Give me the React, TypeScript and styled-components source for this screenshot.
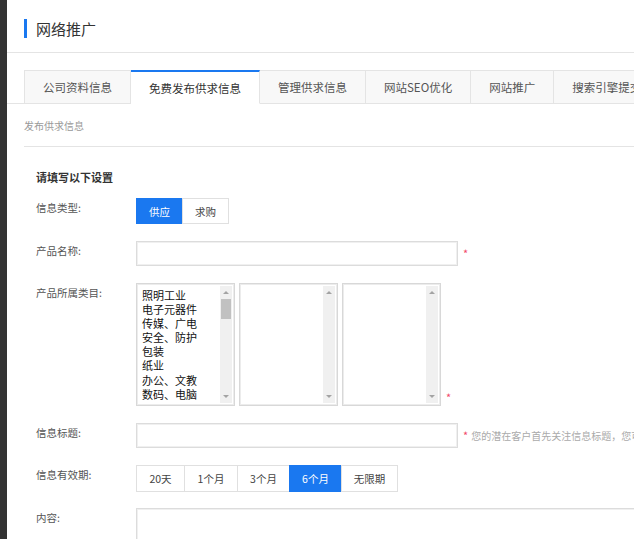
import React from "react";
import styled, { createGlobalStyle } from "styled-components";

const GlobalStyle = createGlobalStyle`
  body {
    margin: 0;
    background: #fff;
    font-family: "Noto Sans CJK SC", "Liberation Sans", sans-serif;
    overflow: hidden;
  }
`;

const BLUE = "#1a78f0";
const LINE = "#e4e4e4";

const Shell = styled.div`
  display: flex;
  height: 539px;
`;

const Sidebar = styled.div`
  width: 7px;
  flex-shrink: 0;
  background: #333;
`;

const Main = styled.div`
  width: 627px;
  flex-shrink: 0;
  overflow: hidden;
  background: #fff;
`;

const Header = styled.header`
  height: 53px;
  box-sizing: border-box;
  padding: 5px 0 0 17px;
  border-bottom: 1px solid ${LINE};
  display: flex;
  align-items: center;
`;

const TitleMark = styled.span`
  width: 3px;
  height: 19px;
  background: ${BLUE};
  margin-right: 9px;
`;

const Title = styled.h1`
  margin: 0;
  font-size: 15px;
  font-weight: normal;
  color: #333;
  line-height: 20px;
`;

const TabBar = styled.nav`
  margin-top: 17px;
  padding-left: 17px;
  display: flex;
  border-bottom: 1px solid ${LINE};
  height: 33px;
`;

const Tab = styled.div<{ $active?: boolean; $first?: boolean }>`
  flex-shrink: 0;
  height: 34px;
  box-sizing: border-box;
  padding: 0 18px;
  display: flex;
  align-items: center;
  white-space: nowrap;
  font-size: 11.5px;
  color: ${(p) => (p.$active ? "#333" : "#555")};
  background: ${(p) => (p.$active ? "#fff" : "#f8f8f8")};
  border-top: ${(p) => (p.$active ? `2px solid ${BLUE}` : `1px solid ${LINE}`)};
  border-right: 1px solid ${LINE};
  border-left: ${(p) => (p.$first ? `1px solid ${LINE}` : "none")};
  border-bottom: 1px solid ${(p) => (p.$active ? "#fff" : LINE)};
`;

const Crumb = styled.div`
  margin-left: 17px;
  padding: 12px 0 10px;
  line-height: 20px;
  font-size: 10px;
  color: #999;
  border-bottom: 1px solid ${LINE};
`;

const Form = styled.form`
  padding-left: 29px;
`;

const Heading = styled.h2`
  margin: 20px 0 11px;
  font-size: 11px;
  line-height: 20px;
  font-weight: bold;
  color: #333;
`;

const Row = styled.div<{ $gap?: number }>`
  display: flex;
  align-items: flex-start;
  margin-bottom: ${(p) => p.$gap ?? 17}px;
`;

const Label = styled.label`
  width: 100px;
  flex-shrink: 0;
  font-size: 10.5px;
  line-height: 20px;
  color: #555;
`;

const Group = styled.div`
  display: flex;
  flex-shrink: 0;
`;

const SegButton = styled.button<{ $active?: boolean; $h: number; $w: number }>`
  width: ${(p) => p.$w}px;
  height: ${(p) => p.$h}px;
  box-sizing: border-box;
  margin: 0 0 0 -1px;
  padding: 0;
  font-family: inherit;
  font-size: 10.5px;
  color: ${(p) => (p.$active ? "#fff" : "#444")};
  background: ${(p) => (p.$active ? BLUE : "#fff")};
  border: 1px solid ${(p) => (p.$active ? BLUE : "#e0e0e0")};
  &:first-child {
    margin-left: 0;
  }
`;

const TextInput = styled.input`
  flex-shrink: 0;
  width: 322px;
  height: 25px;
  box-sizing: border-box;
  border: 1px solid #dcdcdc;
  box-shadow: inset 0 0 0 1px #f0f0f0;
  outline: none;
  margin: 0;
`;

const Required = styled.span<{ $top?: number }>`
  flex-shrink: 0;
  color: #f2486a;
  font-size: 11px;
  line-height: 1;
  margin: ${(p) => p.$top ?? 7}px 0 0 5px;
`;

const Hint = styled.span`
  font-size: 10px;
  line-height: 20px;
  margin: 3px 0 0 3px;
  color: #aaa;
  white-space: nowrap;
`;

const Lists = styled.div`
  display: flex;
  flex-shrink: 0;
  gap: 4px;
`;

const ListBox = styled.div`
  position: relative;
  width: 99px;
  height: 123px;
  box-sizing: border-box;
  border: 1px solid #d8d8d8;
  box-shadow: inset 0 0 0 1px #ececec;
  overflow: hidden;
  padding: 4px 0 0 5px;
`;

const ListItem = styled.div`
  font-size: 11px;
  line-height: 14.1px;
  color: #111;
  white-space: nowrap;
`;

const ScrollTrack = styled.div`
  position: absolute;
  top: 2px;
  right: 2px;
  bottom: 2px;
  width: 12px;
  background: #f0f0f0;
`;

const Arrow = styled.span<{ $down?: boolean }>`
  position: absolute;
  left: 3px;
  ${(p) => (p.$down ? "bottom: 5px;" : "top: 5px;")}
  width: 0;
  height: 0;
  border-left: 3px solid transparent;
  border-right: 3px solid transparent;
  ${(p) =>
    p.$down ? "border-top: 3px solid #a3a3a3;" : "border-bottom: 3px solid #a3a3a3;"}
`;

const Thumb = styled.span`
  position: absolute;
  top: 13px;
  left: 1px;
  width: 10px;
  height: 20px;
  background: #c1c1c1;
`;

const TextArea = styled.textarea`
  flex-shrink: 0;
  width: 520px;
  height: 120px;
  box-sizing: border-box;
  border: 1px solid #dcdcdc;
  box-shadow: inset 0 0 0 1px #f0f0f0;
  resize: none;
  margin: 0;
  outline: none;
`;

const tabs = ["公司资料信息", "免费发布供求信息", "管理供求信息", "网站SEO优化", "网站推广", "搜索引擎提交"];
const categories = ["照明工业", "电子元器件", "传媒、广电", "安全、防护", "包装", "纸业", "办公、文教", "数码、电脑"];
const periods = [
  { t: "20天", w: 49 },
  { t: "1个月", w: 54 },
  { t: "3个月", w: 53 },
  { t: "6个月", w: 53, active: true },
  { t: "无限期", w: 57 },
];

const Scroll = ({ thumb }: { thumb?: boolean }) => (
  <ScrollTrack>
    <Arrow />
    {thumb && <Thumb />}
    <Arrow $down />
  </ScrollTrack>
);

export default function App() {
  return (
    <>
      <GlobalStyle />
      <Shell>
        <Sidebar />
        <Main>
          <Header>
            <TitleMark />
            <Title>网络推广</Title>
          </Header>
          <TabBar>
            {tabs.map((t, i) => (
              <Tab key={t} $first={i === 0} $active={i === 1}>
                {t}
              </Tab>
            ))}
          </TabBar>
          <Crumb>发布供求信息</Crumb>
          <Form onSubmit={(e) => e.preventDefault()}>
            <Heading>请填写以下设置</Heading>
            <Row>
              <Label>信息类型:</Label>
              <Group>
                <SegButton type="button" $active $h={26} $w={47}>
                  供应
                </SegButton>
                <SegButton type="button" $h={26} $w={47}>
                  求购
                </SegButton>
              </Group>
            </Row>
            <Row>
              <Label>产品名称:</Label>
              <TextInput />
              <Required>*</Required>
            </Row>
            <Row>
              <Label>产品所属类目:</Label>
              <Lists>
                <ListBox>
                  {categories.map((c) => (
                    <ListItem key={c}>{c}</ListItem>
                  ))}
                  <Scroll thumb />
                </ListBox>
                <ListBox>
                  <Scroll />
                </ListBox>
                <ListBox>
                  <Scroll />
                </ListBox>
              </Lists>
              <Required $top={109}>*</Required>
            </Row>
            <Row>
              <Label>信息标题:</Label>
              <TextInput />
              <Required>*</Required>
              <Hint>您的潜在客户首先关注信息标题，您可以在标题中突出产品的特点</Hint>
            </Row>
            <Row $gap={16}>
              <Label>信息有效期:</Label>
              <Group>
                {periods.map((p) => (
                  <SegButton type="button" key={p.t} $active={p.active} $h={27} $w={p.w}>
                    {p.t}
                  </SegButton>
                ))}
              </Group>
            </Row>
            <Row>
              <Label>内容:</Label>
              <TextArea />
            </Row>
          </Form>
        </Main>
      </Shell>
    </>
  );
}
